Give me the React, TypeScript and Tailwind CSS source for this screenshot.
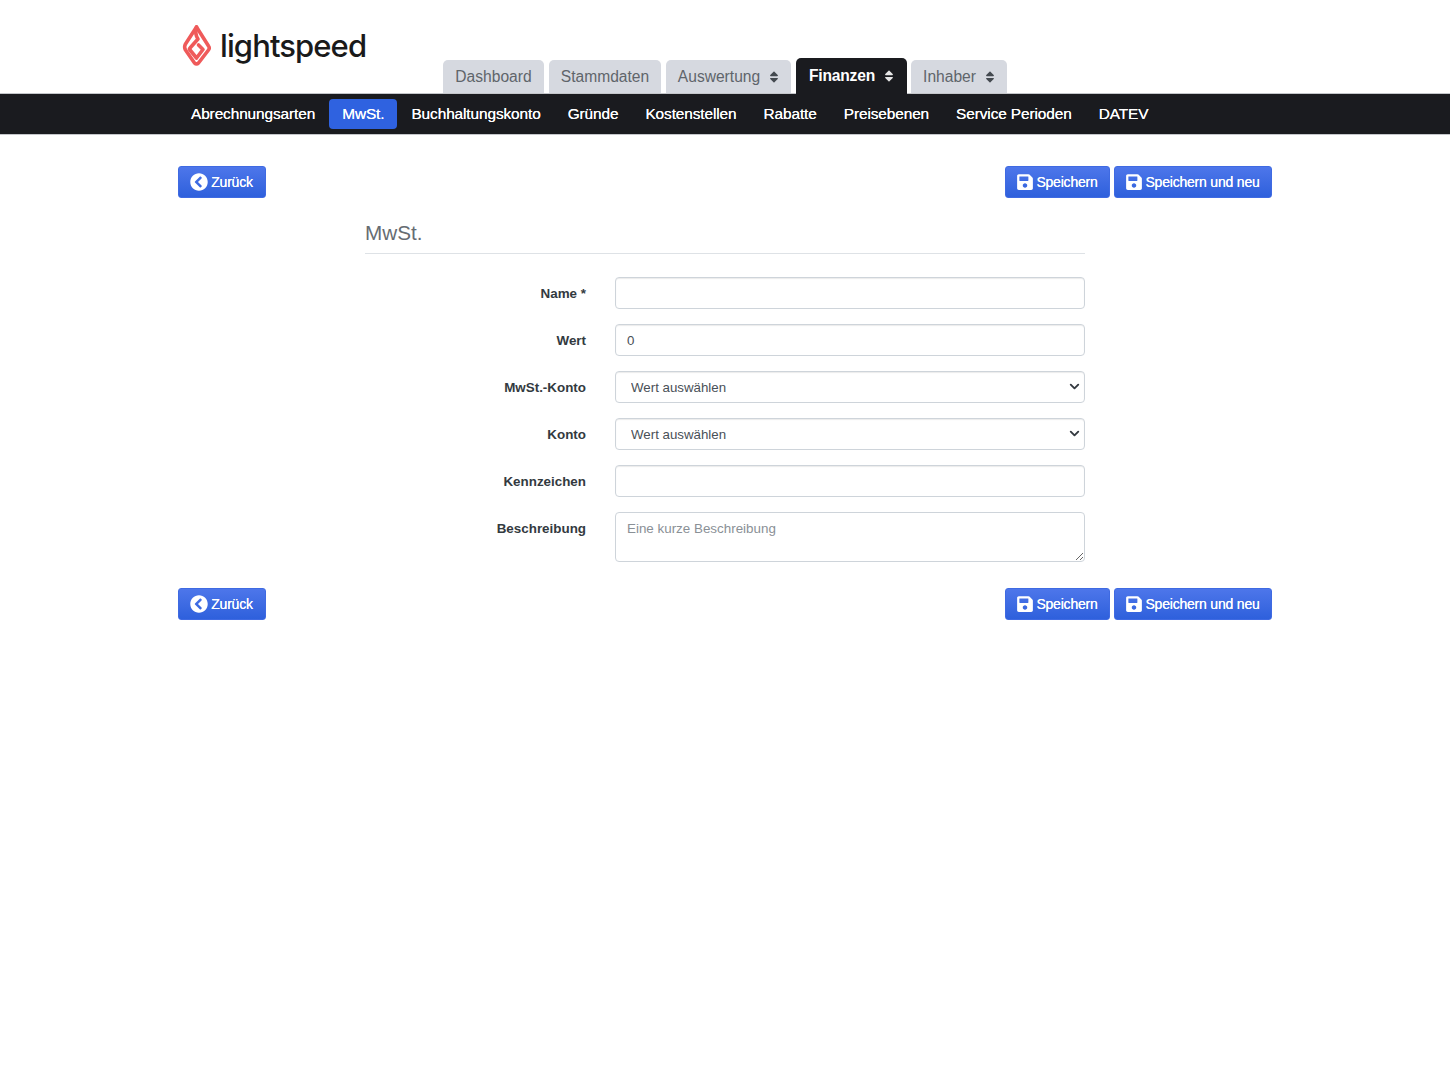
import React from 'react';
import { FaChevronCircleLeft, FaSave, FaSort } from 'react-icons/fa';
import { ChevronDown } from 'lucide-react';

const topTabs = [
  { label: 'Dashboard', width: 'w-[101px]' },
  { label: 'Stammdaten', width: 'w-[112px]' },
  { label: 'Auswertung', width: 'w-[125px]', sort: true },
  { label: 'Finanzen', width: 'w-[111px]', sort: true, active: true },
  { label: 'Inhaber', width: 'w-[96px]', sort: true },
];

const subItems = [
  'Abrechnungsarten',
  'MwSt.',
  'Buchhaltungskonto',
  'Gründe',
  'Kostenstellen',
  'Rabatte',
  'Preisebenen',
  'Service Perioden',
  'DATEV',
];

const btn =
  'flex h-8 items-center justify-center rounded-[3px] border border-[#3f6ae2] bg-gradient-to-b from-[#4d76ea] to-[#2e60dc] pr-px text-[14px] tracking-[-0.2px] text-white [text-shadow:0_0_0.4px_#fff]';
const fieldBox = 'h-8 w-[470px] rounded-[4px] border border-[#ced4da] bg-white shadow-[inset_0_1px_1px_rgba(0,0,0,0.08)]';

const Logo: React.FC = () => (
  <div className="flex items-center gap-[8px]">
    <svg width="30" height="44" viewBox="0 0 30 44" fill="none" stroke="#ef5a5a" strokeWidth="3.6" strokeLinejoin="round" strokeLinecap="round">
      <path d="M14.5 3 L3.5 20 Q1.8 23 3.5 26 L12.5 39 Q14.5 41 16.5 39 L26.5 26 Q28 24 26.5 22 L14.5 3" />
      <path d="M14.5 3 Q12.5 10 16 15 L8 24 Q7 25 8 26 L14.5 34 L21 25.5 L16.5 21" />
    </svg>
    <span className="-mt-[2px] font-['Inter',sans-serif] text-[31px] leading-none font-medium tracking-[-0.9px] text-[#1a1a1a]">lightspeed</span>
  </div>
);

const ButtonBar: React.FC = () => (
  <div className="flex items-center justify-between">
    <button className={`${btn} w-[88px] gap-[3px]`}>
      <FaChevronCircleLeft size={18} />
      Zurück
    </button>
    <div className="flex gap-1">
      <button className={`${btn} w-[105px] gap-[2px]`}>
        <FaSave size={18} />
        Speichern
      </button>
      <button className={`${btn} w-[158px] gap-[2px]`}>
        <FaSave size={18} />
        Speichern und neu
      </button>
    </div>
  </div>
);

const Row: React.FC<{ label: string; children: React.ReactNode; top?: boolean }> = ({ label, children, top }) => (
  <div className={`flex gap-[29px] ${top ? 'items-start' : 'items-center'}`}>
    <label className={`w-[221px] text-right text-[13.4px] font-bold text-[#333a40] ${top ? 'pt-[7px]' : 'pt-[2px]'}`}>{label}</label>
    {children}
  </div>
);

const SelectBox: React.FC = () => (
  <div className="relative">
    <select className={`${fieldBox} appearance-none pt-px pl-[15px] text-[13.3px] text-[#495057]`}>
      <option>Wert auswählen</option>
    </select>
    <ChevronDown size={15} strokeWidth={3} className="pointer-events-none absolute top-[8px] right-[3px] text-[#343a40]" />
  </div>
);

const App: React.FC = () => {
  return (
    <div className="min-h-[1080px] bg-white font-['Liberation_Sans',Arial,sans-serif]">
      <header className="flex h-[93px] pl-[178px]">
        <div className="w-[265px] pt-[24px] pl-[4px]">
          <Logo />
        </div>
        <nav className="flex items-end gap-[5px] self-end">
          {topTabs.map((tab) => (
            <div
              key={tab.label}
              className={`flex items-center justify-center rounded-t-[5px] text-[15.6px] ${tab.width} ${tab.sort ? 'gap-[7px] pl-[2px]' : ''} ${
                tab.active
                  ? 'relative z-10 -mr-px -mb-px h-9 bg-[#1a1b1f] text-[15.4px] font-bold tracking-[-0.2px] text-white'
                  : 'h-[33px] bg-[#d6d9e0] text-[#5f656b]'
              }`}
            >
              {tab.label}
              {tab.sort && <FaSort size={14} className={tab.active ? 'text-[#e5e5e5]' : 'text-[#444a50]'} />}
            </div>
          ))}
        </nav>
      </header>

      <nav className="flex h-[42px] items-center gap-px border-t border-b border-[#c4c6ca] bg-[#1a1b1f] pl-[178px]">
        {subItems.map((item) => (
          <a
            key={item}
            className={`flex h-[30px] items-center rounded-[4px] px-[13px] text-[15.4px] tracking-[-0.1px] text-white [text-shadow:0_0_0.6px_#fff] ${
              item === 'MwSt.' ? 'bg-[#2f62e0]' : ''
            }`}
          >
            {item}
          </a>
        ))}
      </nav>

      <main className="mx-[178px] pt-[31px]">
        <ButtonBar />
        <div className="mx-auto mt-[22px] w-[720px]">
          <h2 className="h-[34px] border-b border-[#dee2e6] text-[20.7px] leading-[26px] text-[#666c72]">MwSt.</h2>
          <div className="mt-[23px] flex flex-col gap-[15px]">
            <Row label="Name *">
              <input className={fieldBox} />
            </Row>
            <Row label="Wert">
              <input className={`${fieldBox} px-[11px] text-[13.3px] text-[#495057]`} defaultValue="0" />
            </Row>
            <Row label="MwSt.-Konto">
              <SelectBox />
            </Row>
            <Row label="Konto">
              <SelectBox />
            </Row>
            <Row label="Kennzeichen">
              <input className={fieldBox} />
            </Row>
            <Row label="Beschreibung" top>
              <textarea
                className="h-[50px] w-[470px] rounded-[4px] border border-[#ced4da] bg-white px-[11px] py-[6px] text-[13.4px] placeholder:text-[#8a9096]"
                placeholder="Eine kurze Beschreibung"
              />
            </Row>
          </div>
        </div>
        <div className="mt-[26px]">
          <ButtonBar />
        </div>
      </main>
    </div>
  );
};

export default App;
